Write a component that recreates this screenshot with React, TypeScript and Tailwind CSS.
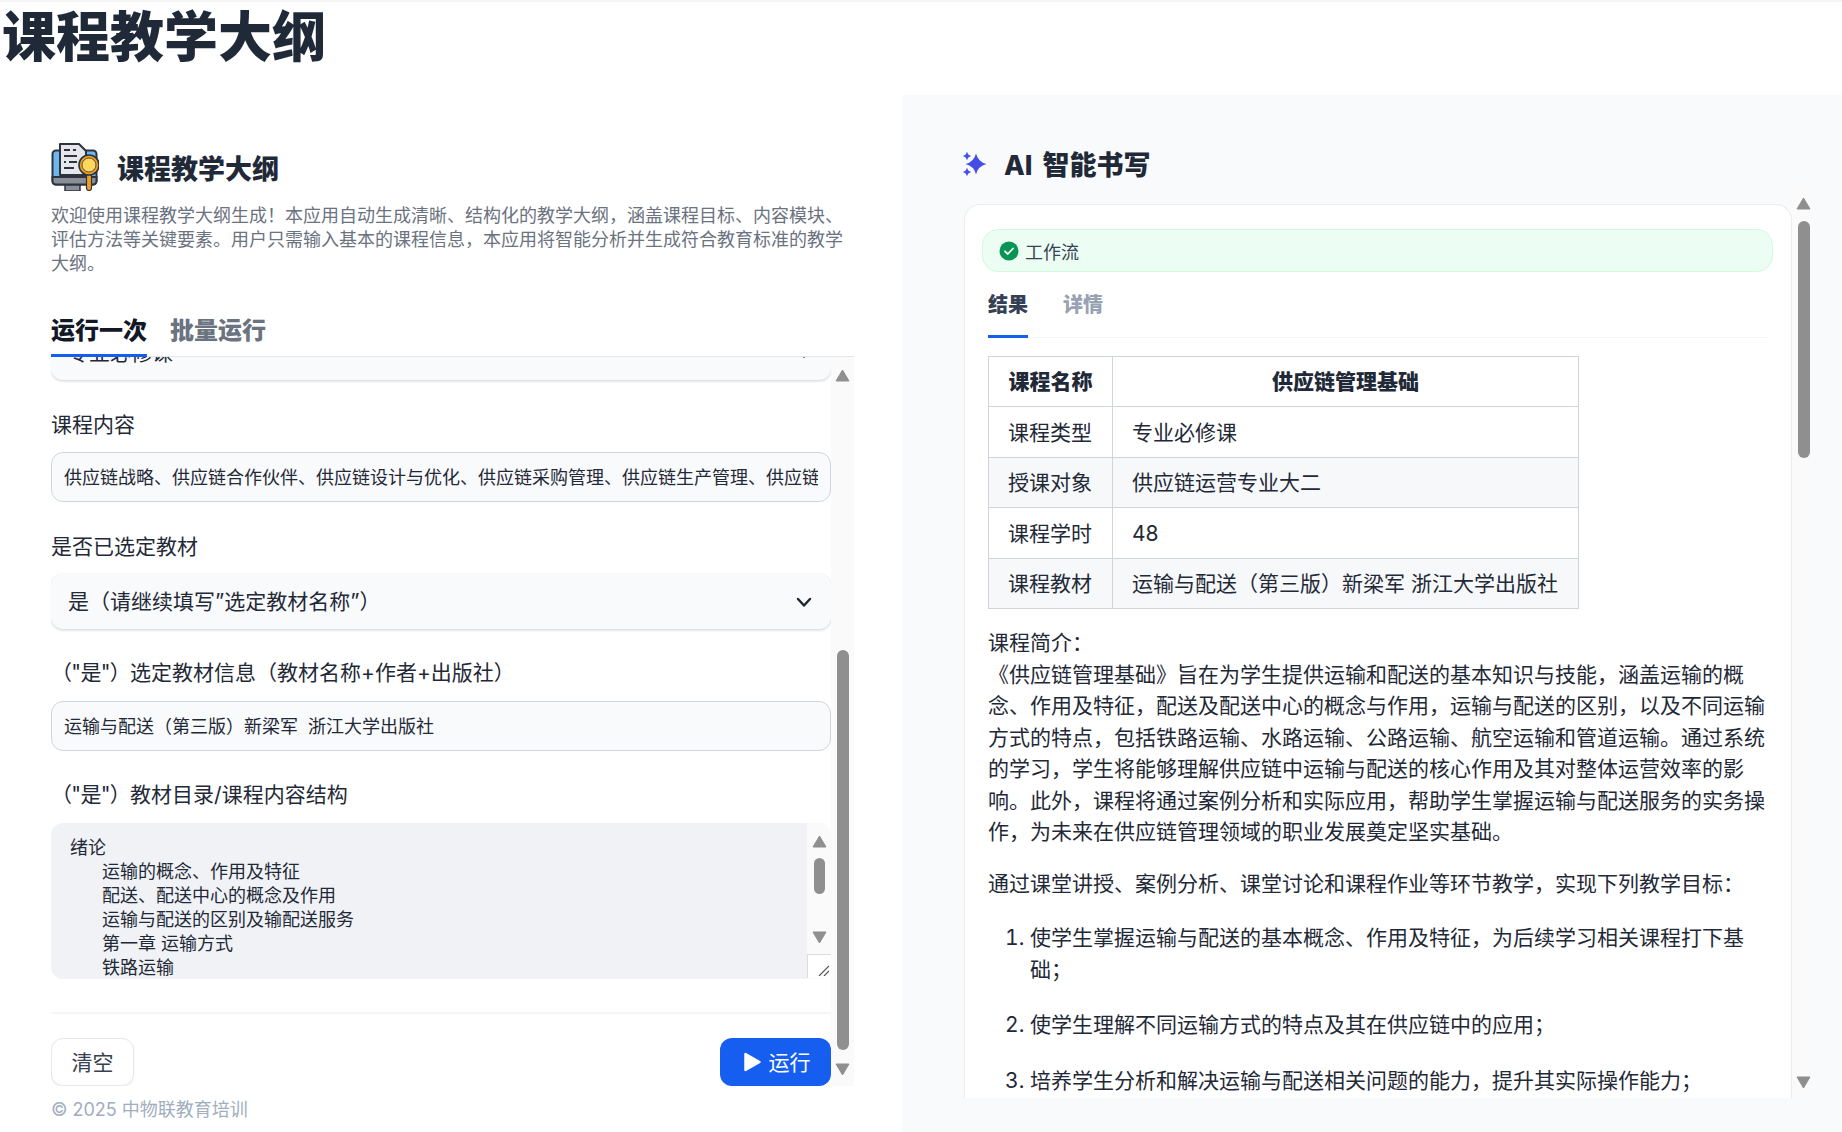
import React from "react";

// 字体统一在根节点设置
const FONT = "font-['Inter','Noto_Sans_CJK_SC',sans-serif]";

const ArrowUp = () => (
  <svg width="15" height="13" viewBox="0 0 15 13" className="block">
    <path d="M7.5 1 L14 12 H1 Z" fill="#8f8f8f" stroke="#8f8f8f" strokeLinejoin="round" />
  </svg>
);

const ArrowDown = () => (
  <svg width="15" height="13" viewBox="0 0 15 13" className="block">
    <path d="M1 1 H14 L7.5 12 Z" fill="#8f8f8f" stroke="#8f8f8f" strokeLinejoin="round" />
  </svg>
);

const FieldLabel = ({ text, prefix }: { text: string; prefix?: string }) => (
  <div className="h-7 text-[21px] leading-7 text-[#1f2937]">
    {prefix && <span className="tracking-[-0.7px]">{prefix}</span>}
    {text}
  </div>
);

const TextInput = ({ value }: { value: string }) => (
  <div className="flex h-[50px] items-center overflow-hidden rounded-xl border border-[#d0d5dd] bg-[#f9fafb] px-3 text-[18px] whitespace-pre text-[#1f2937]">
    <span className="overflow-hidden">{value}</span>
  </div>
);

const SelectBox = ({ value }: { value: string }) => (
  <div className="flex h-[55px] items-center justify-between rounded-xl bg-[#f9fafb] pr-[18px] pl-[17px] text-[21px] text-[#1f2937] shadow-[0_1px_3px_rgba(16,24,40,0.2)]">
    <span>{value}</span>
    <svg width="18" height="18" viewBox="0 0 18 18" fill="none" stroke="#1f2937" strokeWidth="2.5" strokeLinecap="round" strokeLinejoin="round">
      <path d="M3 6 L9 12.5 L15 6" />
    </svg>
  </div>
);

const DocIcon = () => (
  <svg width="48" height="48" viewBox="0 0 48 48" className="shrink-0">
    <rect x="14" y="41" width="15" height="7" fill="#8b8f97" stroke="#2b3440" strokeWidth="1.5" />
    <rect x="1.5" y="7.5" width="44" height="34" rx="3.5" fill="#6db6ee" stroke="#2b3440" strokeWidth="2" />
    <path d="M1.5 34 H45.5 V38 a3.5 3.5 0 0 1 -3.5 3.5 H5 a3.5 3.5 0 0 1 -3.5 -3.5 Z" fill="#8b8f97" stroke="#2b3440" strokeWidth="2" />
    <path d="M9 1 H28 L35 8 V32 H9 Z" fill="#e6e7ea" stroke="#2b3440" strokeWidth="2" strokeLinejoin="round" />
    <path d="M13 7 H19 M22 7 H25 M13 13 H26 M13 19 H15 M18 19 H26 M13 25 H23" stroke="#2b3440" strokeWidth="1.8" />
    <rect x="35.5" y="30" width="5" height="17.5" rx="2.5" fill="#f0a020" stroke="#2b3440" strokeWidth="1.2" />
    <circle cx="38" cy="22" r="10" fill="#f0a020" stroke="#2b3440" strokeWidth="1.6" />
    <circle cx="38" cy="22" r="7" fill="#ffd75e" stroke="#2b3440" strokeWidth="0.8" />
  </svg>
);

const SparkIcon = () => (
  <svg width="24" height="24" viewBox="0 0 24 24" className="-mt-[4px] shrink-0">
    <path d="M13 1.5 Q15 10 23.5 12 Q15 14 13 22.5 Q11 14 2.5 12 Q11 10 13 1.5 Z" fill="#444ce7" />
    <path d="M4 0.5 Q4.6 3.4 7.5 4 Q4.6 4.6 4 7.5 Q3.4 4.6 0.5 4 Q3.4 3.4 4 0.5 Z" fill="#444ce7" stroke="#444ce7" strokeWidth="0.6" />
    <path d="M4 16.5 Q4.6 19.4 7.5 20 Q4.6 20.6 4 23.5 Q3.4 20.6 0.5 20 Q3.4 19.4 4 16.5 Z" fill="#444ce7" stroke="#444ce7" strokeWidth="0.6" />
  </svg>
);

const rows = [
  ["课程类型", "专业必修课"],
  ["授课对象", "供应链运营专业大二"],
  ["课程学时", "48"],
  ["课程教材", "运输与配送（第三版）新梁军 浙江大学出版社"],
];

const outline = [
  "运输的概念、作用及特征",
  "配送、配送中心的概念及作用",
  "运输与配送的区别及输配送服务",
  "第一章 运输方式",
  "铁路运输",
];

const App = () => {
  return (
    <div className={`${FONT} flex h-[1132px] flex-col overflow-hidden border-t-2 border-[#f5f5f5] bg-white`}>
      <h1 className="h-[93px] pt-[4px] pl-[2px] text-[54px] leading-[64px] font-extrabold text-[#1f2937]">
        课程教学大纲
      </h1>

      <div className="flex flex-1">
        {/* 左侧表单 */}
        <div className="w-[902px] shrink-0 pt-[48px] pl-[51px]">
          <div className="flex items-center gap-[18px]">
            <DocIcon />
            <span className="mt-[5px] text-[27px] leading-8 font-extrabold text-[#1f2937]">课程教学大纲</span>
          </div>
          <p className="mt-[13px] w-[800px] text-[18px] leading-6 text-[#6b7280]">
            欢迎使用课程教学大纲生成！本应用自动生成清晰、结构化的教学大纲，涵盖课程目标、内容模块、评估方法等关键要素。用户只需输入基本的课程信息，本应用将智能分析并生成符合教育标准的教学大纲。
          </p>

          <div className="mt-[29px] flex h-[52px] w-[803px] gap-[23px] border-b border-[#e5e7eb]">
            <div className="h-[52px] border-b-[3px] border-[#155eef] text-[24px] leading-[52px] font-extrabold text-[#111827]">运行一次</div>
            <div className="text-[24px] leading-[52px] font-extrabold text-[#6b7280]">批量运行</div>
          </div>

          <div className="flex h-[729px] w-[803px]">
            <div className="w-[780px] shrink-0 overflow-hidden">
              <div className="-mt-[32px]">
                <SelectBox value="专业必修课" />
              </div>
              <div className="mt-[31px]"><FieldLabel text="课程内容" /></div>
              <div className="mt-[13px]">
                <TextInput value="供应链战略、供应链合作伙伴、供应链设计与优化、供应链采购管理、供应链生产管理、供应链物流管理、供应链库存管理" />
              </div>
              <div className="mt-[31px]"><FieldLabel text="是否已选定教材" /></div>
              <div className="mt-[13px]">
                <SelectBox value="是（请继续填写”选定教材名称”）" />
              </div>
              <div className="mt-[30px]"><FieldLabel prefix={'（"是"）'} text="选定教材信息（教材名称+作者+出版社）" /></div>
              <div className="mt-[14px]">
                <TextInput value="运输与配送（第三版）新梁军  浙江大学出版社" />
              </div>
              <div className="mt-[30px]"><FieldLabel prefix={'（"是"）'} text="教材目录/课程内容结构" /></div>

              <div className="mt-[14px] flex h-[156px] overflow-hidden rounded-xl bg-[#f0f2f6]">
                <div className="flex-1 overflow-hidden pt-[13px] pl-[19px] text-[18px] leading-6 text-[#1f2937]">
                  <div>绪论</div>
                  {outline.map((line) => (
                    <div key={line} className="pl-8">{line}</div>
                  ))}
                </div>
                <div className="flex w-6 shrink-0 flex-col items-center bg-[#fafafa] pt-[12px]">
                  <ArrowUp />
                  <div className="mt-[10px] h-9 w-[11px] rounded-full bg-[#8f8f8f]" />
                  <div className="mt-[37px]"><ArrowDown /></div>
                  <div className="mt-[10px] flex h-6 w-full items-end justify-end border-t border-l border-[#dcdcdc] bg-white p-[2px]">
                    <svg width="12" height="12" viewBox="0 0 12 12" fill="none" stroke="#555" strokeWidth="1.2">
                      <path d="M2 12 L12 2 M7 12 L12 7" />
                    </svg>
                  </div>
                </div>
              </div>

              <div className="mt-[33px] h-[2px] bg-[#f3f4f6]" />

              <div className="mt-6 flex h-12 items-center justify-between">
                <button className="h-12 w-[83px] rounded-xl border border-[#e5e7eb] bg-white pt-[2px] text-[21px] text-[#374151] shadow-[0_1px_2px_rgba(16,24,40,0.08)]">
                  清空
                </button>
                <button className="flex h-12 w-[111px] items-center justify-center gap-[7px] rounded-xl bg-[#155eef] pt-[2px] pl-[2px] text-[21px] text-white">
                  <svg width="19" height="20" viewBox="0 0 19 20" className="-mt-[2px]">
                    <path d="M2.5 2 L16.5 10 L2.5 18 Z" fill="#fff" stroke="#fff" strokeWidth="2.5" strokeLinejoin="round" />
                  </svg>
                  运行
                </button>
              </div>
            </div>

            <div className="flex w-[23px] shrink-0 flex-col items-center bg-[#fafafa] pt-[12px]">
              <ArrowUp />
              <div className="mt-[268px] h-[400px] w-3 rounded-full bg-[#8f8f8f]" />
              <div className="mt-[13px]"><ArrowDown /></div>
            </div>
          </div>

          <div className="mt-[11px] text-[18px] leading-[26px] text-[#a0aec0]">© 2025 中物联教育培训</div>
        </div>

        {/* 右侧结果 */}
        <div className="flex-1 bg-[#f9fafb] pt-[91px]">
          <div className="-mt-[36px] flex h-8 items-center gap-[17px] pl-[61px]">
            <SparkIcon />
            <span className="text-[27px] leading-8 font-extrabold [word-spacing:4px] text-[#1f2937]">AI 智能书写</span>
          </div>

          <div className="mt-[4px] flex h-[912px] pl-[62px]">
            <div className="mt-[18px] w-[828px] shrink-0 overflow-hidden rounded-t-2xl border border-b-0 border-[#eaecf0] bg-white">
              <div className="mt-[24px] mr-[18px] ml-[17px] flex h-[43px] items-center gap-[6px] rounded-2xl border border-[#d1fadf] bg-[#ecfdf3] pl-4 text-[18px] text-[#374151]">
                <svg width="20" height="20" viewBox="0 0 20 20">
                  <circle cx="10" cy="10" r="9.5" fill="#079455" />
                  <path d="M6 10.3 L8.8 13 L14 7.5" fill="none" stroke="#fff" strokeWidth="1.8" strokeLinecap="round" strokeLinejoin="round" />
                </svg>
                <span className="pt-[3px]">工作流</span>
              </div>

              <div className="mx-[23px]">
                <div className="mt-[10px] flex h-[56px] gap-[35px] border-b border-[#f2f4f7]">
                  <div className="h-[56px] border-b-[3px] border-[#155eef] text-[20px] leading-[46px] font-extrabold text-[#344054]">结果</div>
                  <div className="text-[20px] leading-[46px] font-extrabold text-[#98a2b3]">详情</div>
                </div>

                <table className="mt-[18px] w-[591px] border-collapse text-[21px] whitespace-nowrap text-[#1f2937]">
                  <thead>
                    <tr className="h-[50px]">
                      <th className="w-[124px] border border-[#d0d5dd] px-[19px] pt-[1px] font-extrabold">课程名称</th>
                      <th className="border border-[#d0d5dd] px-[19px] pt-[1px] font-extrabold">供应链管理基础</th>
                    </tr>
                  </thead>
                  <tbody>
                    {rows.map((row, i) => (
                      <tr key={row[0]} className={`h-[50.5px] ${i % 2 === 1 ? "bg-[#f6f8fa]" : "bg-white"}`}>
                        <td className="border border-[#d0d5dd] px-[19px] pt-[1px]">{row[0]}</td>
                        <td className="border border-[#d0d5dd] px-[19px] pt-[1px]">{row[1]}</td>
                      </tr>
                    ))}
                  </tbody>
                </table>

                <div className="mt-[18px] text-[21px] leading-[31.5px] text-[#1f2937]">
                  <p>
                    课程简介：
                    <br />
                    《供应链管理基础》旨在为学生提供运输和配送的基本知识与技能，涵盖运输的概念、作用及特征，配送及配送中心的概念与作用，运输与配送的区别，以及不同运输方式的特点，包括铁路运输、水路运输、公路运输、航空运输和管道运输。通过系统的学习，学生将能够理解供应链中运输与配送的核心作用及其对整体运营效率的影响。此外，课程将通过案例分析和实际应用，帮助学生掌握运输与配送服务的实务操作，为未来在供应链管理领域的职业发展奠定坚实基础。
                  </p>
                  <p className="mt-[20px]">通过课堂讲授、案例分析、课堂讨论和课程作业等环节教学，实现下列教学目标：</p>
                  <ol className="mt-[23px] list-decimal pl-[42px]">
                    <li>使学生掌握运输与配送的基本概念、作用及特征，为后续学习相关课程打下基础；</li>
                    <li className="mt-[24px]">使学生理解不同运输方式的特点及其在供应链中的应用；</li>
                    <li className="mt-[24px]">培养学生分析和解决运输与配送相关问题的能力，提升其实际操作能力；</li>
                  </ol>
                </div>
              </div>
            </div>

            <div className="flex w-[23px] shrink-0 flex-col items-center bg-[#fafafa] pt-[11px]">
              <ArrowUp />
              <div className="mt-[11px] h-[237px] w-3 rounded-full bg-[#8f8f8f]" />
              <div className="mt-[618px]"><ArrowDown /></div>
            </div>
          </div>
        </div>
      </div>
    </div>
  );
};

export default App;
